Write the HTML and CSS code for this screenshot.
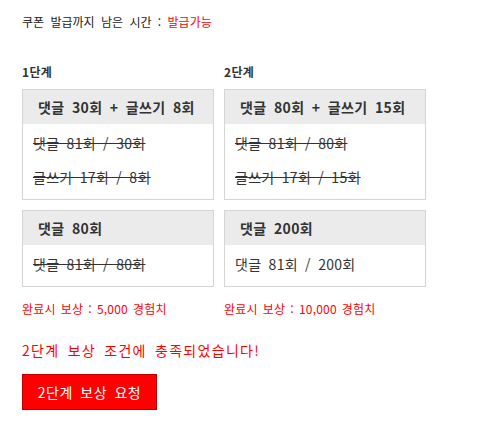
FILE: index.html
```html
<!DOCTYPE html>
<html lang="ko">
<head>
<meta charset="utf-8">
<link rel="stylesheet" href="styles.css">
</head>
<body>
<div class="wrap">
  <p class="timer">쿠폰 발급까지 남은 시간 : <span class="red">발급가능</span></p>
  <div class="stages">
    <div class="col">
      <div class="label">1단계</div>
      <div class="box">
        <div class="head">댓글 30회 + 글쓰기 8회</div>
        <div class="body">
          <div class="row done">댓글 81회 / 30회</div>
          <div class="row done">글쓰기 17회 / 8회</div>
        </div>
      </div>
      <div class="box">
        <div class="head">댓글 80회</div>
        <div class="body">
          <div class="row done">댓글 81회 / 80회</div>
        </div>
      </div>
      <div class="reward">완료시 보상 : 5,000 경험치</div>
    </div>
    <div class="col">
      <div class="label">2단계</div>
      <div class="box">
        <div class="head">댓글 80회 + 글쓰기 15회</div>
        <div class="body">
          <div class="row done">댓글 81회 / 80회</div>
          <div class="row done">글쓰기 17회 / 15회</div>
        </div>
      </div>
      <div class="box">
        <div class="head">댓글 200회</div>
        <div class="body">
          <div class="row">댓글 81회 / 200회</div>
        </div>
      </div>
      <div class="reward">완료시 보상 : 10,000 경험치</div>
    </div>
  </div>
  <p class="notice">2단계 보상 조건에 충족되었습니다!</p>
  <button class="btn" type="button">2단계 보상 요청</button>
</div>
</body>
</html>
```

FILE: styles.css
```css
html, body {
  margin: 0;
  padding: 0;
  background: #fff;
}
body {
  font-family: "Noto Sans CJK KR", "Noto Sans", sans-serif;
  color: #222;
  word-spacing: 3px;
  letter-spacing: 0.3px;
}
.wrap {
  padding: 14px 22px;
}
.timer {
  margin: 0;
  font-size: 12px;
  line-height: 16px;
  color: #222;
  letter-spacing: 0;
}
.red {
  color: #ff0000;
}
.stages {
  display: grid;
  grid-template-columns: 192px 202px;
  column-gap: 10px;
  margin-top: 34px;
}
.col {
  display: flex;
  flex-direction: column;
}
.label {
  font-size: 12px;
  line-height: 16px;
  font-weight: bold;
  color: #333;
  margin-bottom: 9px;
}
.box {
  border: 1px solid #d5d5d5;
  margin-bottom: 10px;
}
.head {
  background: #ebebeb;
  height: 34px;
  line-height: 34px;
  padding-left: 15px;
  font-size: 14px;
  font-weight: bold;
  color: #333;
  letter-spacing: 0.4px;
  white-space: nowrap;
}
.body {
  padding: 9px 10px 11px;
  display: flex;
  flex-direction: column;
  gap: 13px;
}
.row {
  font-size: 14px;
  line-height: 21px;
  color: #333;
}
.done {
  text-decoration: line-through;
}
.reward {
  margin-top: 4px;
  font-size: 12px;
  line-height: 16px;
  color: #ff0000;
  word-spacing: 1.5px;
  letter-spacing: 0.2px;
}
.notice {
  margin: 23px 0 0;
  font-size: 14px;
  line-height: 20px;
  color: #ff0000;
  letter-spacing: 1.3px;
}
.btn {
  display: block;
  margin-top: 14px;
  width: 135px;
  height: 36px;
  background: #ff0000;
  border: 1px solid #c00000;
  color: #fff;
  font-family: "Noto Sans CJK KR", "Noto Sans", sans-serif;
  font-size: 14px;
  word-spacing: 3px;
  letter-spacing: 0.5px;
  padding: 0;
}
```
